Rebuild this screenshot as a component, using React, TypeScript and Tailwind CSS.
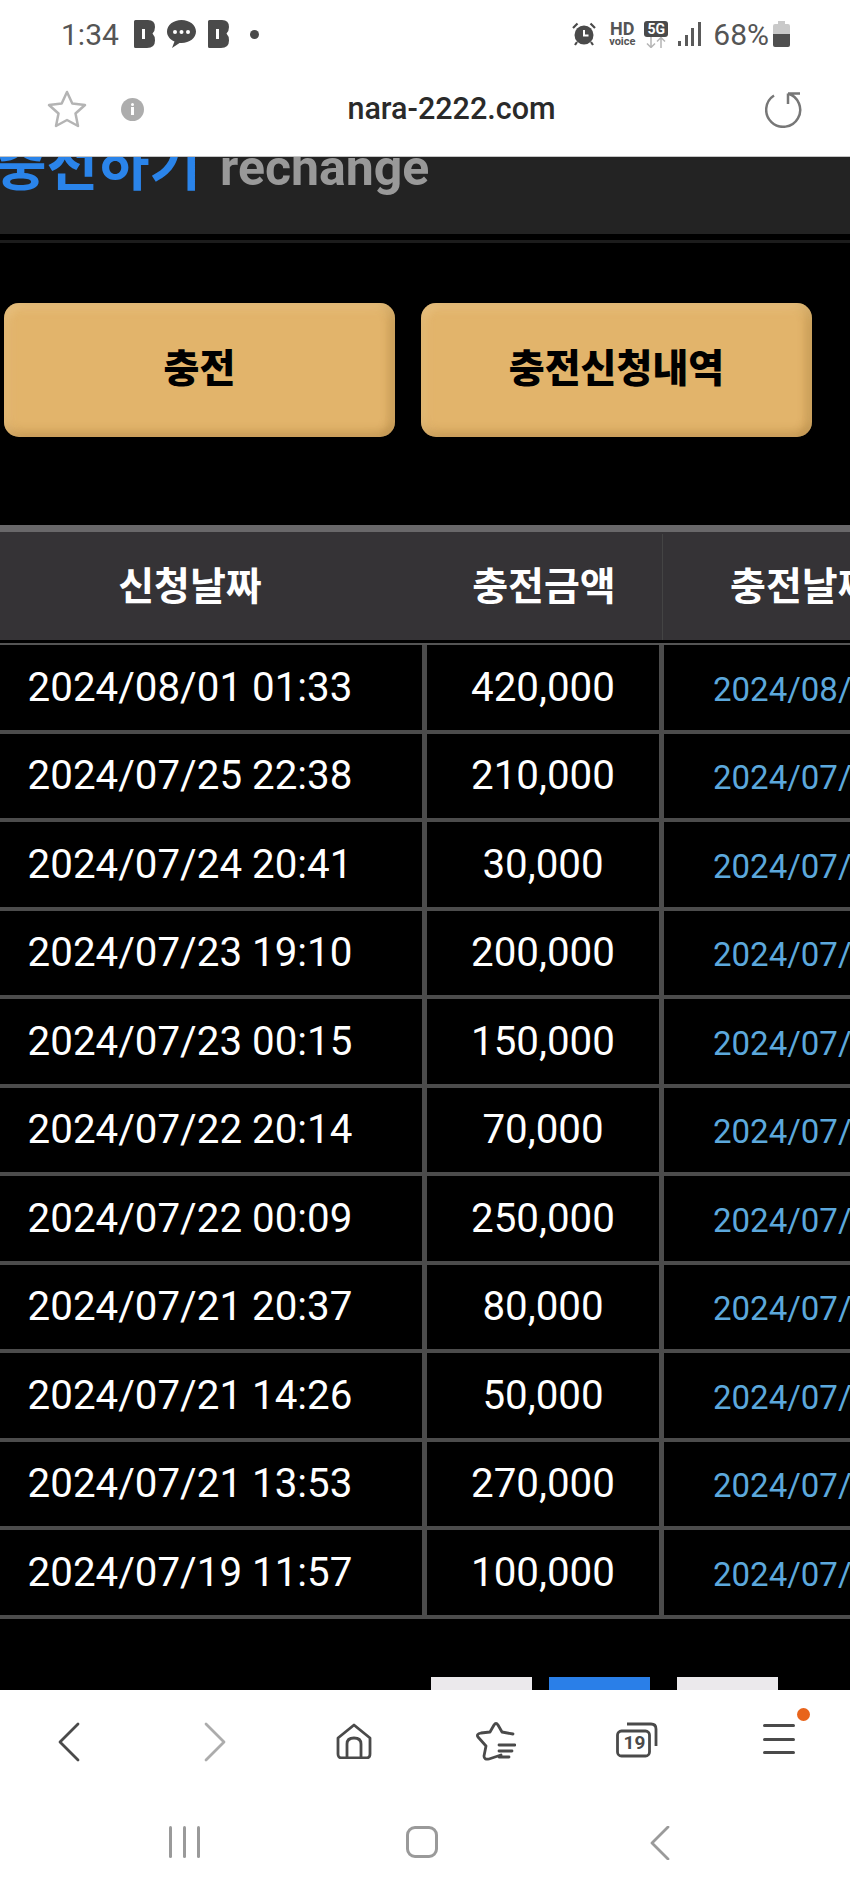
const rows = [
  ['2024/08/01 01:33', '420,000', '2024/08/'],
  ['2024/07/25 22:38', '210,000', '2024/07/'],
  ['2024/07/24 20:41', '30,000', '2024/07/'],
  ['2024/07/23 19:10', '200,000', '2024/07/'],
  ['2024/07/23 00:15', '150,000', '2024/07/'],
  ['2024/07/22 20:14', '70,000', '2024/07/'],
  ['2024/07/22 00:09', '250,000', '2024/07/'],
  ['2024/07/21 20:37', '80,000', '2024/07/'],
  ['2024/07/21 14:26', '50,000', '2024/07/'],
  ['2024/07/21 13:53', '270,000', '2024/07/'],
  ['2024/07/19 11:57', '100,000', '2024/07/'],
]

const cjk = "font-['Roboto','Noto_Sans_CJK_KR',sans-serif]"

const BIcon = () => (
  <svg width="21" height="28" viewBox="0 0 21 28">
    <path
      fillRule="evenodd"
      fill="#4a4a4a"
      d="M0 1.5Q0 0 1.5 0H14Q21 0 21 7Q21 11 18.5 13.5Q21 16 21 20.5Q21 28 13 28H1.5Q0 28 0 26.5ZM8 9V19H11V9Z"
    />
  </svg>
)

const Bubble = () => (
  <svg width="29" height="28" viewBox="0 0 29 28">
    <path fill="#4a4a4a" d="M14.5 0C6.5 0 0 5 0 11.5C0 16 3 19.500 7.500 21.500L5 28L12.500 23C13 23 14 23 14.500 23C22.500 23 29 18 29 11.500C29 5 22.500 0 14.500 0Z" />
    <circle cx="8" cy="12" r="2" fill="#fff" />
    <circle cx="14.500" cy="12" r="2" fill="#fff" />
    <circle cx="21" cy="12" r="2" fill="#fff" />
  </svg>
)

const Alarm = () => (
  <svg width="24" height="24" viewBox="0 0 24 24">
    <circle cx="12" cy="13" r="9.500" fill="#4a4a4a" />
    <path d="M12 8V13.500H16.500" fill="none" stroke="#fff" strokeWidth="2" />
    <path d="M1 6L5.500 1.500M23 6L18.500 1.500M5 20L3 23M19 20L21 23" stroke="#4a4a4a" strokeWidth="2.200" />
  </svg>
)

const Signal = () => (
  <svg width="23" height="24" viewBox="0 0 23 24">
    <rect x="0" y="19" width="3" height="5" fill="#5a5a5a" />
    <rect x="7" y="13" width="3" height="11" fill="#5a5a5a" />
    <rect x="13" y="6" width="3" height="18" fill="#5a5a5a" />
    <rect x="20" y="0" width="3" height="24" fill="#5a5a5a" />
  </svg>
)

const Battery = () => (
  <svg width="17" height="26" viewBox="0 0 17 26">
    <path fill="#c9c9c9" d="M5 0H12V3H15Q17 3 17 5V14H0V5Q0 3 2 3H5Z" />
    <path fill="#4f4f4f" d="M0 13H17V24Q17 26 15 26H2Q0 26 0 24Z" />
  </svg>
)

const FiveG = () => (
  <div className="flex flex-col items-center w-[24px]">
    <div className="w-[24px] h-[16px] rounded-[3px] bg-[#4a4a4a] text-white text-[14px] font-bold leading-[16px] text-center font-['Roboto',sans-serif]">
      5G
    </div>
    <svg width="22" height="11" viewBox="0 0 22 11">
      <path d="M6 0V10M2 6.500L6 10.500L10 6.500" fill="none" stroke="#b5b5b5" strokeWidth="1.500" />
      <path d="M16 11V1M12 4.500L16 .5L20 4.500" fill="none" stroke="#b5b5b5" strokeWidth="1.500" />
    </svg>
  </div>
)

const StatusBar = () => (
  <div className="h-[68px] flex items-center pl-[61px] pr-[60px] font-['Roboto',sans-serif] text-[#555]">
    <span className="text-[30px] w-[73px]">1:34</span>
    <BIcon />
    <span className="w-[12px]" />
    <Bubble />
    <span className="w-[12px]" />
    <BIcon />
    <span className="w-[21px]" />
    <span className="w-[9px] h-[9px] rounded-full bg-[#4a4a4a]" />
    <span className="flex-1" />
    <Alarm />
    <div className="ml-[12px] w-[28px] flex flex-col items-center font-bold text-[#555]">
      <span className="text-[18px] leading-[15px]">HD</span>
      <span className="text-[11px] leading-[11px]">voice</span>
    </div>
    <div className="ml-[8px]">
      <FiveG />
    </div>
    <div className="ml-[10px]">
      <Signal />
    </div>
    <span className="ml-[12px] text-[30px]">68%</span>
    <div className="ml-[4px]">
      <Battery />
    </div>
  </div>
)

const UrlBar = () => (
  <div className="h-[89px] flex items-center pl-[47px] pr-[47px] border-b border-[#c4c4c4] pb-[6px]">
    <svg width="40" height="39" viewBox="0 0 40 39">
      <path
        d="M20 2L25.300 13.500L38 15L28.500 23.500L31 36L20 30L9 36L11.500 23.500L2 15L14.700 13.500Z"
        fill="none"
        stroke="#b4b4b4"
        strokeWidth="2.500"
        strokeLinejoin="round"
      />
    </svg>
    <div className="ml-[34px] w-[23px] h-[23px] rounded-full bg-[#adadad] flex flex-col items-center justify-center gap-[1px]">
      <span className="w-[3px] h-[3px] bg-white rounded-full" />
      <span className="w-[3px] h-[8px] bg-white" />
    </div>
    <div className="flex-1 text-center pr-[6px] text-[30.5px] font-medium text-[#2a2a2a] font-['Roboto',sans-serif]">
      nara-2222.com
    </div>
    <svg width="38" height="38" viewBox="0 0 38 38">
      <path
        d="M23 3.500A17 17 0 1 1 9 5.500M23 3.500H35M23 3.500V14"
        fill="none"
        stroke="#777"
        strokeWidth="2.500"
      />
    </svg>
  </div>
)

const buttonClass =
  "w-[391px] h-[134px] pb-[2px] rounded-[15px] bg-[#e2b46b] text-black text-[39px] font-black flex items-center justify-center shadow-[inset_0_6px_10px_rgba(255,230,180,0.25),inset_6px_0_10px_rgba(255,230,180,0.15),inset_-6px_0_10px_rgba(120,80,20,0.22),inset_0_-6px_10px_rgba(120,80,20,0.18)] " +
  cjk

const Table = () => (
  <div className="mt-[88px] w-[850px] overflow-hidden">
    <div className={`flex w-[990px] -ml-[42px] h-[115px] pt-[2px] border-t-[7px] border-[#69686a] bg-[#353336] text-white text-[39px] font-bold ${cjk}`}>
      <div className="w-[464px] flex items-center justify-center">신청날짜</div>
      <div className="w-[241px] pl-[4px] flex items-center justify-center border-r border-[#444]">충전금액</div>
      <div className="flex-1 flex items-center pl-[67px] whitespace-nowrap">충전날짜</div>
    </div>
    <div className="mt-[3px] border-t-2 border-[#555]">
      {rows.map((r) => (
        <div key={r[0]} className="flex w-[990px] -ml-[42px] h-[88.55px] border-b-[4px] border-[#4c4c4c] font-['Roboto',sans-serif] text-white text-[40.3px]">
          <div className="w-[469px] pt-[1px] border-r-[5px] border-[#4c4c4c] flex items-center justify-center">{r[0]}</div>
          <div className="w-[237px] pt-[1px] border-r-[5px] border-[#4c4c4c] flex items-center justify-center">{r[1]}</div>
          <div className="flex-1 flex items-center pl-[49px] pt-[4px] text-[33px] text-[#5ca8dc]">{r[2]}</div>
        </div>
      ))}
    </div>
  </div>
)

const Pagination = () => (
  <div className="mt-[58px] ml-[431px] flex h-[50px]">
    <div className="w-[101px] bg-[#ebe9ec]" />
    <div className="ml-[17px] w-[101px] bg-[#2a7fe8]" />
    <div className="ml-[27px] w-[101px] bg-[#ebe9ec]" />
  </div>
)

const BottomNav = () => (
  <div className="h-[199px] bg-white">
    <div className="grid grid-cols-6 h-[114px] pt-[32px] items-start justify-items-center">
      <svg width="40" height="40" viewBox="0 0 40 40">
        <path d="M27 2L9 20L27 38" fill="none" stroke="#4a4a4a" strokeWidth="2.800" strokeLinecap="round" strokeLinejoin="round" />
      </svg>
      <svg width="40" height="40" viewBox="0 0 40 40">
        <path d="M14 2L32 20L14 38" fill="none" stroke="#acacac" strokeWidth="2.800" strokeLinecap="round" strokeLinejoin="round" />
      </svg>
      <svg width="36" height="36" viewBox="0 0 36 36" className="mt-[1px]">
        <path
          d="M2 15L18 2L34 15V31Q34 35 30 35H6Q2 35 2 31ZM11 35V21Q11 15 18 15Q25 15 25 21V35"
          fill="none"
          stroke="#4a4a4a"
          strokeWidth="2.800"
          strokeLinejoin="round"
        />
      </svg>
      <svg width="40" height="40" viewBox="0 0 40 40">
        <path
          d="M25 33L13 37Q8 38 8 34L10 24L2 15Q0 12 5 11L14 10L18 3Q20 0 22 3L26 10L37 12M39 23H23M36 29H23M33 35H23"
          fill="none"
          stroke="#4a4a4a"
          strokeWidth="2.800"
          strokeLinecap="round"
          strokeLinejoin="round"
        />
      </svg>
      <div className="relative w-[42px] h-[36px]">
        <svg width="42" height="36" viewBox="0 0 42 36" className="absolute inset-0">
          <rect x="1.500" y="9" width="32" height="25" rx="4" fill="none" stroke="#4a4a4a" strokeWidth="2.800" />
          <path d="M11 2H35Q40 2 40 7V24" fill="none" stroke="#4a4a4a" strokeWidth="2.800" />
        </svg>
        <span className="absolute left-[5px] top-[8px] w-[26px] text-center text-[19px] leading-[26px] font-bold text-[#4a4a4a] font-['Roboto',sans-serif]">
          19
        </span>
      </div>
      <div className="relative w-[32px] h-[32px] mt-[2px]">
        <div className="flex flex-col justify-between h-[30px]">
          <span className="h-[3px] rounded-full bg-[#4a4a4a]" />
          <span className="h-[3px] rounded-full bg-[#4a4a4a]" />
          <span className="h-[3px] rounded-full bg-[#4a4a4a]" />
        </div>
        <span className="absolute -top-[16px] left-[34px] w-[13px] h-[13px] rounded-full bg-[#e8641b]" />
      </div>
    </div>
    <div className="grid grid-cols-3 pl-[65px] pr-[71px] justify-items-center pt-[22px]">
      <div className="flex gap-[11px] h-[32px]">
        <span className="w-[3px] bg-[#9a9a9a] rounded-full" />
        <span className="w-[3px] bg-[#9a9a9a] rounded-full" />
        <span className="w-[3px] bg-[#9a9a9a] rounded-full" />
      </div>
      <div className="w-[32px] h-[32px] border-[3px] border-[#9a9a9a] rounded-[9px]" />
      <svg width="20" height="34" viewBox="0 0 20 34">
        <path d="M18 1L2 17L18 33" fill="none" stroke="#9a9a9a" strokeWidth="2.800" strokeLinecap="round" strokeLinejoin="round" />
      </svg>
    </div>
  </div>
)

export default function App() {
  return (
    <div className="w-[850px] h-[1889px] flex flex-col overflow-hidden bg-black">
      <div className="bg-white">
        <StatusBar />
        <UrlBar />
      </div>
      <div className="flex-1 overflow-hidden">
        <div className={`h-[77px] bg-[#232323] overflow-hidden whitespace-nowrap font-bold leading-[50px] ${cjk}`}>
          <div className="-mt-[16px] -ml-[5px] flex items-baseline">
            <span className="text-[#2a84ea] text-[56px]">충전하기</span>
            <span className="text-[#999] text-[50px] ml-[19px]">rechange</span>
          </div>
        </div>
        <div className="mt-[6px] h-[3px] bg-[#1c1c1c]" />
        <div className="mt-[60px] flex pl-[4px] gap-[26px]">
          <div className={buttonClass}>충전</div>
          <div className={buttonClass}>충전신청내역</div>
        </div>
        <Table />
        <Pagination />
      </div>
      <BottomNav />
    </div>
  )
}
